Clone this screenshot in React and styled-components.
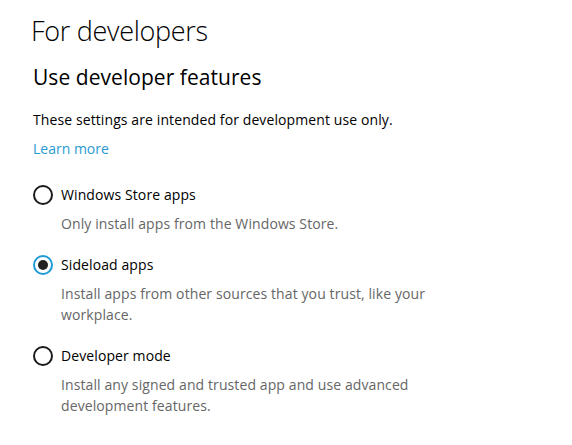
import styled, { createGlobalStyle } from 'styled-components';

const GlobalStyle = createGlobalStyle`
  html, body {
    margin: 0;
    padding: 0;
    background: #ffffff;
  }
  body {
    font-family: 'Open Sans', 'Noto Sans', 'Liberation Sans', sans-serif;
    color: #000;
  }
`;

const options = [
  {
    id: 'store',
    label: 'Windows Store apps',
    desc: 'Only install apps from the Windows Store.',
  },
  {
    id: 'sideload',
    label: 'Sideload apps',
    desc: 'Install apps from other sources that you trust, like your workplace.',
  },
  {
    id: 'dev',
    label: 'Developer mode',
    desc: 'Install any signed and trusted app and use advanced development features.',
  },
];

const Page = styled.div`
  width: 572px;
  height: 445px;
  box-sizing: border-box;
  padding: 12px 0 0 31px;
  overflow: hidden;
`;

const Title = styled.h1`
  margin: 0;
  font-size: 27px;
  font-weight: 300;
  line-height: 38px;
  letter-spacing: -0.3px;
`;

const Section = styled.div`
  padding-left: 2px;
`;

const SubTitle = styled.h2`
  margin: 13px 0 0;
  font-size: 21px;
  font-weight: 400;
  line-height: 28px;
  letter-spacing: 0.05px;
`;

const Body = styled.p`
  margin: 19px 0 0;
  font-size: 14px;
  line-height: 20px;
  letter-spacing: 0.1px;
`;

const Link = styled.a`
  display: inline-block;
  margin-top: 9px;
  font-size: 14px;
  line-height: 20px;
  color: #2a9ad2;
  text-decoration: none;
`;

const Options = styled.div`
  display: flex;
  flex-direction: column;
  gap: 21px;
  margin-top: 26px;
`;

const Option = styled.div`
  display: grid;
  grid-template-columns: 20px 1fr;
  column-gap: 8px;
  row-gap: 8px;
  align-items: center;
`;

const Radio = styled.span`
  box-sizing: border-box;
  width: 20px;
  height: 20px;
  border-radius: 50%;
  border: 2px solid ${(p) => (p.$checked ? '#1e9bd7' : '#1a1a1a')};
  display: flex;
  align-items: center;
  justify-content: center;

  &::after {
    content: '';
    display: ${(p) => (p.$checked ? 'block' : 'none')};
    width: 10px;
    height: 10px;
    border-radius: 50%;
    background: #222;
  }
`;

const Label = styled.span`
  font-size: 14px;
  line-height: 20px;
  letter-spacing: 0.1px;
`;

const Desc = styled.span`
  grid-column: 2;
  max-width: 380px;
  font-size: 14px;
  line-height: 21px;
  color: #666666;
  letter-spacing: 0.1px;
`;

export default function App() {
  const selected = 'sideload';
  return (
    <>
      <GlobalStyle />
      <Page>
        <Title>For developers</Title>
        <Section>
          <SubTitle>Use developer features</SubTitle>
          <Body>These settings are intended for development use only.</Body>
          <Link href="#">Learn more</Link>
          <Options>
            {options.map((o) => (
              <Option key={o.id}>
                <Radio $checked={o.id === selected} />
                <Label>{o.label}</Label>
                <Desc>{o.desc}</Desc>
              </Option>
            ))}
          </Options>
        </Section>
      </Page>
    </>
  );
}
